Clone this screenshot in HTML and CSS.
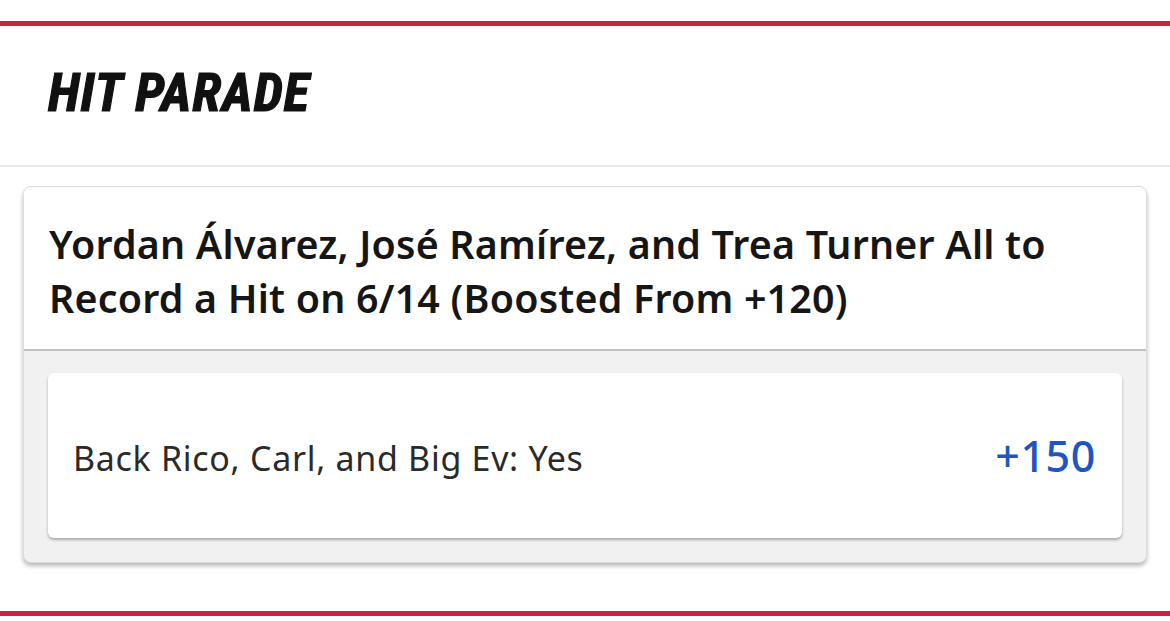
FILE: index.html
```html
<!DOCTYPE html>
<html lang="en">
<head>
<meta charset="utf-8">
<title>Hit Parade</title>
<link rel="stylesheet" href="styles.css">
</head>
<body>
<div class="rule"></div>
<header class="section-head">
  <h1 class="title">HIT PARADE</h1>
</header>
<main class="content">
  <section class="card">
    <div class="card-head">
      <h2 class="market">Yordan Álvarez, José Ramírez, and Trea Turner All to Record a Hit on 6/14 (Boosted From +120)</h2>
    </div>
    <div class="card-body">
      <div class="option">
        <span class="option-label">Back Rico, Carl, and Big Ev: Yes</span>
        <span class="option-odds">+150</span>
      </div>
    </div>
  </section>
</main>
<div class="rule rule-bottom"></div>
</body>
</html>
```

FILE: styles.css
```css
html, body {
  margin: 0;
  padding: 0;
  background: #ffffff;
}
body {
  font-family: "Noto Sans", "Open Sans", sans-serif;
  color: #151515;
  width: 1170px;
  height: 621px;
  overflow: hidden;
}
.rule {
  height: 5px;
  background: #d01f3e;
  margin-top: 21px;
}
.rule-bottom {
  margin-top: 48px;
}
.section-head {
  height: 141px;
  display: flex;
  align-items: center;
  padding-left: 48px;
  border-bottom: 2px solid #e6e6e6;
  box-sizing: border-box;
}
.title {
  margin: 0;
  font-family: "Liberation Sans Narrow", "Roboto Condensed", Roboto, sans-serif;
  font-weight: 700;
  font-style: italic;
  font-size: 53px;
  letter-spacing: 1px;
  -webkit-text-stroke: 1.2px #111111;
  color: #111111;
  line-height: 1;
  padding-bottom: 5px;
}
.content {
  padding: 19px 23px 0;
}
.card {
  border: 1px solid #dddddd;
  border-radius: 8px;
  box-shadow: 0 3px 4px rgba(0, 0, 0, 0.28);
  overflow: hidden;
  background: #f1f1f1;
}
.card-head {
  background: #ffffff;
  padding: 30px 25px 24px;
  border-bottom: 2px solid #c2c2c2;
}
.market {
  margin: 0;
  font-size: 39.4px;
  font-weight: 600;
  line-height: 54px;
  color: #161616;
  letter-spacing: 0.2px;
}
.card-body {
  padding: 22px 24px 24px;
}
.option {
  height: 165px;
  background: #ffffff;
  border-radius: 6px;
  box-shadow: 0 2px 3px rgba(0, 0, 0, 0.3);
  display: flex;
  align-items: center;
  justify-content: space-between;
  padding: 0 26px 0 25px;
}
.option-label {
  font-size: 34px;
  color: #2a2a2a;
  letter-spacing: 0.7px;
  padding-top: 4px;
}
.option-odds {
  font-size: 43px;
  font-weight: 500;
  letter-spacing: 0.6px;
  color: #1f55c2;
}
```
